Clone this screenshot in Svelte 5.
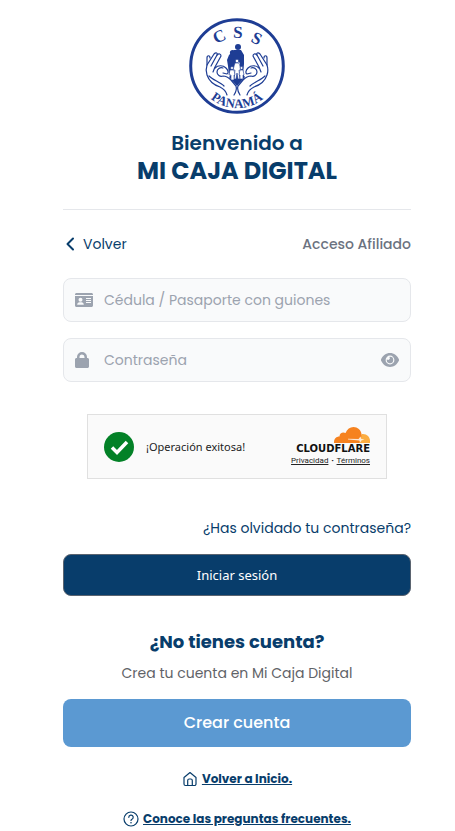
<script>
  let cedula = $state('');
  let password = $state('');
  let visible = $state(false);
</script>

<main class="page">
  <header class="brand">
    <svg class="seal" viewBox="0 0 96 96" role="img" aria-label="CSS Panamá">
      <defs><path id="seal-arc" d="M6 48a42 42 0 0 0 84 0" /></defs>
      <circle cx="48" cy="48" r="46.300" fill="#fff" stroke="#1e3d94" stroke-width="3" />
      <g class="seal-text">
        <text transform="translate(30 18) rotate(-25)" y="6" font-size="17">C</text>
        <text transform="translate(49 14) rotate(2)" y="6" font-size="17">S</text>
        <text transform="translate(68 20) rotate(27)" y="6" font-size="17">S</text>
        <text font-size="13"><textPath href="#seal-arc" startOffset="50%">PANAMÁ</textPath></text>
      </g>
      <g fill="none" stroke="#1e3d94" stroke-width="1.200" stroke-linecap="round" stroke-linejoin="round">
        <g id="hand">
          <path d="M38 77c-1-4-3-6-7-8-6-2-11-6-13-12-1-3-1-7 0-10l7-11c2-2 4-1 3 1l-6 11" />
          <path d="M18 47v-7c0-3 3-3 3 0M28 37c2-2 4-1 4 1l-6 11-2 5" />
          <path d="M26 50c3-3 8-3 11 0 2 2 3 5 1 6l-4-1" />
          <path d="M34 50c-3-1-6 1-6 4s3 5 6 4c3 0 5 1 8 4l5 6c1 3 0 6-2 9M20 58c4 4 11 6 15 10" />
        </g>
        <use href="#hand" transform="matrix(-1 0 0 1 96 0)" />
      </g>
      <g fill="#1e3d94">
        <circle cx="49" cy="29" r="3" />
        <circle cx="43.500" cy="34.500" r="2.600" />
        <path d="M45 32h7l3 5v9l-1 10h-3V45l-3-2-3 5-2 9h-3l-1-9-1-6 2-5z" />
        <path d="M40 59l4-4h9l3 4-8 9z" />
      </g>
      <g fill="#fff" stroke="#1e3d94" stroke-width=".600">
        <circle cx="48" cy="43" r="1.700" />
        <path d="M46 45h4l2 7h-2l1 9h-2l-1-6-1 6h-2l1-9h-2z" />
        <circle cx="43" cy="50" r="1.500" />
        <path d="M41 52h4l1 5h-1v5h-3v-5h-2z" />
        <circle cx="52.500" cy="50" r="1.400" />
        <path d="M51 52h3l1 5h-1v4h-3v-4h-1z" />
      </g>
    </svg>
    <h1><span class="welcome">Bienvenido a</span><span class="name">MI CAJA DIGITAL</span></h1>
  </header>

  <div class="access">
    <a class="back" href="#volver">
      <svg viewBox="0 0 16 16" width="16" height="16" aria-hidden="true"><path d="M10 2.500L4.500 8l5.500 5.500" fill="none" stroke="currentColor" stroke-width="2" stroke-linecap="round" stroke-linejoin="round" /></svg>
      Volver
    </a>
    <span class="kind">Acceso Afiliado</span>
  </div>

  <form onsubmit={(e) => e.preventDefault()}>
    <div class="field">
      <svg viewBox="0 0 18 16" width="18" height="16" aria-hidden="true">
        <path fill="currentColor" fill-rule="evenodd" d="M0 3V2.500C0 1.700.7 1 1.500 1h15c.8 0 1.500.7 1.500 1.500V3zM0 4h18v9.500c0 .8-.7 1.500-1.500 1.500h-15C.7 15 0 14.300 0 13.500zM5.500 5.800a2 2 0 1 0 0 4 2 2 0 0 0 0-4zM2.200 12.700h6.600c0-1.500-1-2.400-2.300-2.400h-2c-1.300 0-2.300.9-2.300 2.400zM11 6v1h5V6zM11 8v1h5V8zM11 10v1h5v-1z" />
      </svg>
      <input type="text" aria-label="Cédula / Pasaporte con guiones" placeholder="Cédula / Pasaporte con guiones" bind:value={cedula} />
    </div>
    <div class="field">
      <svg class="lock" viewBox="0 0 14 16" width="14" height="16" aria-hidden="true">
        <path fill="currentColor" fill-rule="evenodd" d="M2 6V5a5 5 0 0 1 10 0v1h.5c.8 0 1.500.7 1.500 1.500v7c0 .8-.7 1.500-1.500 1.500h-11C.7 16 0 15.300 0 14.500v-7C0 6.700.7 6 1.500 6zM4.500 6h5V5a2.500 2.500 0 0 0-5 0z" />
      </svg>
      <input type={visible ? 'text' : 'password'} aria-label="Contraseña" placeholder="Contraseña" bind:value={password} />
      <button class="eye" type="button" aria-label="Mostrar contraseña" onclick={() => (visible = !visible)}>
        <svg viewBox="0 0 18 14" width="18" height="14" aria-hidden="true">
          <path fill="currentColor" fill-rule="evenodd" d="M9 0c4 0 7.300 2.600 9 6.400v1.200C16.300 11.400 13 14 9 14S1.700 11.400 0 7.600V6.400C1.700 2.600 5 0 9 0zm0 2.600a4.400 4.400 0 1 0 0 8.800 4.400 4.400 0 0 0 0-8.800z" />
          <path fill="currentColor" d="M9 3.800A3.200 3.200 0 1 1 5.900 6.300a1.700 1.700 0 0 0 2.500-2.400z" />
        </svg>
      </button>
    </div>

    <div class="captcha">
      <svg class="check" viewBox="0 0 30 30" width="30" height="30" aria-hidden="true">
        <circle cx="15" cy="15" r="15" fill="#038127" />
        <path d="M8 15.500l5 5L23 10" fill="none" stroke="#fff" stroke-width="3.500" />
      </svg>
      <span class="success">¡Operación exitosa!</span>
      <div class="provider">
        <svg viewBox="0 0 36 16" width="36" height="16" aria-hidden="true">
          <path fill="#fbad41" d="M28 7c4.500-.5 8 2.500 8 7v2H22z" />
          <path fill="#f6821f" d="M0 16c-.2-4 2-6.500 5.500-6.500C5.500 6 9 4.500 11.500 6 13 2 16 0 19.500 0c4 0 7.500 3 8 7 .2 2-.2 3.500-1 5L25 16z" />
          <path d="M14 11.700l10.500.3 2-2.500.8 2.500 3.200.5-3.200 1-1 2-1-2-11.300-1z" fill="#fff" opacity=".800" />
        </svg>
        <span class="wordmark">CLOUDFLARE</span>
        <span class="legal"><a href="#privacidad">Privacidad</a><b>•</b><a href="#terminos">Términos</a></span>
      </div>
    </div>

    <a class="forgot" href="#recuperar">¿Has olvidado tu contraseña?</a>
    <button class="login" type="submit">Iniciar sesión</button>
  </form>

  <section class="signup">
    <h2>¿No tienes cuenta?</h2>
    <p>Crea tu cuenta en Mi Caja Digital</p>
    <button class="create" type="button">Crear cuenta</button>
  </section>

  <nav class="links">
    <a href="#inicio">
      <svg viewBox="0 0 16 16" width="16" height="16" aria-hidden="true"><path d="M2 6.500L8 1.500l6 5V13a1.500 1.500 0 0 1-1.500 1.500h-9A1.500 1.500 0 0 1 2 13zM5.700 14V9.500A1.500 1.500 0 0 1 7.200 8h1.600a1.500 1.500 0 0 1 1.500 1.500V14" fill="none" stroke="currentColor" stroke-width="1.200" stroke-linejoin="round" /></svg>
      <span>Volver a Inicio.</span>
    </a>
    <a href="#preguntas">
      <svg viewBox="0 0 16 16" width="16" height="16" aria-hidden="true"><g fill="none" stroke="currentColor" stroke-width="1.200" stroke-linecap="round"><circle cx="8" cy="8" r="7" /><path d="M5.800 6.300A2.200 2.200 0 1 1 9 8.200c-.7.4-1 .7-1 1.300" /></g><circle cx="8" cy="11.700" r=".8" fill="currentColor" /></svg>
      <span>Conoce las preguntas frecuentes.</span>
    </a>
  </nav>
</main>

<style>
  :global(body) { margin: 0; background: #fff; }
  .page { box-sizing: border-box; padding: 18px 44px 0 63px; font-family: Poppins, Inter, sans-serif; color: #083d6b; font-size: 14px; line-height: 20px; }
  a { color: inherit; text-decoration: none; }
  svg { display: block; flex: none; }
  button { cursor: pointer; padding: 0; }
  .brand { display: flex; flex-direction: column; align-items: center; padding-bottom: 24px; border-bottom: 1px solid #e5e7eb; }
  .seal { width: 96px; height: 96px; }
  .seal-text { fill: #1e3d94; font-family: "Liberation Serif", serif; font-weight: 700; text-anchor: middle; }
  h1 { margin: 15px 0 0; text-align: center; line-height: 28px; }
  h1 span { display: block; }
  .welcome { font-size: 20px; font-weight: 600; }
  .name { font-size: 24px; font-weight: 700; }
  .access { display: flex; justify-content: space-between; align-items: center; margin: 24px 0; font-size: 14px; }
  .back { display: flex; align-items: center; gap: 4px; }
  .kind { color: #6b7280; font-weight: 500; }
  form { display: flex; flex-direction: column; }
  .field { box-sizing: border-box; height: 44px; margin-bottom: 16px; padding: 0 11px; display: flex; align-items: center; gap: 11px; color: #9ca3af; background: #f9fafb; border: 1px solid #e5e7eb; border-radius: 8px; }
  .lock { margin-right: 4px; }
  input { flex: 1; min-width: 0; padding: 0; border: 0; outline: 0; background: none; font: inherit; color: #374151; }
  input::placeholder { color: #9ca3af; opacity: 1; }
  .eye { border: 0; background: none; color: inherit; }
  .captcha { box-sizing: border-box; width: 300px; height: 65px; align-self: center; margin: 16px 0 38px; padding: 0 16px; display: flex; align-items: center; background: #fafafa; border: 1px solid #e0e0e0; color: #232323; }
  .success { margin-left: 12px; font: 11px/16px "Noto Sans", sans-serif; }
  .provider { margin-left: auto; display: flex; flex-direction: column; align-items: flex-end; }
  .wordmark { font: 700 10px/12px "DejaVu Sans", sans-serif; color: #111; }
  .legal { display: flex; gap: 3px; font: 8px/12px Roboto, sans-serif; }
  .legal b { font-size: 6px; }
  .legal a { text-decoration: underline; }
  .forgot { align-self: flex-end; margin: 1px 0 16px; }
  .login { height: 42px; border: 1px solid #5b6470; border-radius: 8px; background: #083d6b; color: #fff; font: 13px/20px "Noto Sans", sans-serif; }
  .signup { display: flex; flex-direction: column; align-items: center; text-align: center; }
  h2 { margin: 32px 0 7px; font-size: 18px; line-height: 28px; font-weight: 700; }
  p { margin: 0; line-height: 20px; color: #5f6368; }
  .create { width: 100%; height: 48px; margin: 16px 0 20px; border: 0; border-radius: 8px; background: #5b99d2; color: #fff; font: 500 16px/24px Poppins, Inter, sans-serif; }
  .links { display: flex; flex-direction: column; align-items: center; gap: 16px; font-size: 12px; line-height: 24px; font-weight: 700; }
  .links a { display: flex; align-items: center; gap: 4px; }
  .links span { text-decoration: underline; }
</style>
